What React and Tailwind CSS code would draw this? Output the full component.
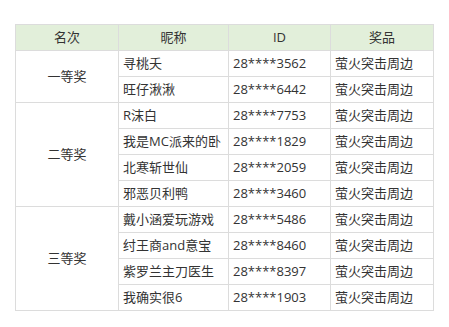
import React from "react";

const groups = [
  {
    name: "一等奖",
    rows: [
      ["寻桃夭", "28****3562"],
      ["旺仔湫湫", "28****6442"],
    ],
  },
  {
    name: "二等奖",
    rows: [
      ["R沫白", "28****7753"],
      ["我是MC派来的卧", "28****1829"],
      ["北寒斩世仙", "28****2059"],
      ["邪恶贝利鸭", "28****3460"],
    ],
  },
  {
    name: "三等奖",
    rows: [
      ["戴小涵爱玩游戏", "28****5486"],
      ["纣王商and意宝", "28****8460"],
      ["紫罗兰主刀医生", "28****8397"],
      ["我确实很6", "28****1903"],
    ],
  },
];

const cell = "border border-[#dcdcdc] h-[26px] px-[4px] p-0 leading-none";

export default function App() {
  return (
    <div
      className="w-[449px] h-[327px] bg-white pt-[24px] pl-[15px] text-[13px] text-[#333]"
      style={{ fontFamily: '"Open Sans", "Noto Sans CJK SC", sans-serif' }}
    >
      <table className="border-collapse table-fixed w-[418px]">
        <colgroup>
          <col className="w-[103px]" />
          <col className="w-[110px]" />
          <col className="w-[102px]" />
          <col className="w-[103px]" />
        </colgroup>
        <thead>
          <tr className="bg-[#e2efda]">
            <th className={`${cell} font-normal text-center`}>名次</th>
            <th className={`${cell} font-normal text-center`}>昵称</th>
            <th className={`${cell} font-normal text-center`}>ID</th>
            <th className={`${cell} font-normal text-center`}>奖品</th>
          </tr>
        </thead>
        <tbody>
          {groups.map((g) =>
            g.rows.map((r, i) => (
              <tr key={g.name + i}>
                {i === 0 && (
                  <td rowSpan={g.rows.length} className={`${cell} text-center`}>
                    {g.name}
                  </td>
                )}
                <td className={`${cell} text-left whitespace-nowrap`}>{r[0]}</td>
                <td className={`${cell} text-left`}>{r[1]}</td>
                <td className={`${cell} text-left`}>萤火突击周边</td>
              </tr>
            ))
          )}
        </tbody>
      </table>
    </div>
  );
}
